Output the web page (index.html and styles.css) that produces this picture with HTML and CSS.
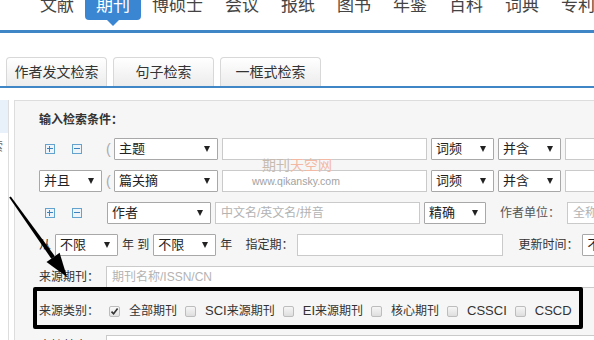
FILE: index.html
```html
<!DOCTYPE html>
<html lang="zh-CN">
<head>
    <meta charset="UTF-8">
    <meta name="viewport" content="width=device-width, initial-scale=1.0">
    <title>期刊检索</title>
    <link rel="stylesheet" href="styles.css">
</head>
<body>
    <div class="topnav">
        <ul class="nav">
            <li>文献</li>
            <li class="on">期刊</li>
            <li>博硕士</li>
            <li>会议</li>
            <li>报纸</li>
            <li>图书</li>
            <li>年鉴</li>
            <li>百科</li>
            <li>词典</li>
            <li>专利</li>
        </ul>
    </div>

    <div class="tabs">
        <div class="tab">作者发文检索</div>
        <div class="tab">句子检索</div>
        <div class="tab">一框式检索</div>
    </div>

    <div class="main">
        <div class="side">
            <div class="side-hl"></div>
            <div class="side-txt">索</div>
        </div>

        <div class="panel">
            <div class="title">输入检索条件：</div>

            <div class="row first">
                <span class="ops"><i class="op plus"></i><i class="op minus"></i></span>
                <span class="paren">(</span>
                <span class="sel w104">主题</span>
                <span class="inp w205"></span>
                <span class="sel w63">词频</span>
                <span class="sel w63">并含</span>
                <span class="inp grow"></span>
            </div>

            <div class="row">
                <span class="sel w63">并且</span>
                <span class="paren">(</span>
                <span class="sel w104">篇关摘</span>
                <span class="inp w205"></span>
                <span class="sel w63">词频</span>
                <span class="sel w63">并含</span>
                <span class="inp grow"></span>
            </div>

            <div class="row">
                <span class="ops"><i class="op plus"></i><i class="op minus"></i></span>
                <span class="sel w104 ml1">作者</span>
                <span class="inp w205">中文名/英文名/拼音</span>
                <span class="sel w62">精确</span>
                <span class="lbl muted ml10">作者单位：</span>
                <span class="inp grow ml3">全称</span>
            </div>

            <div class="row">
                <span class="lbl">从</span>
                <span class="sel w63">不限</span>
                <span class="lbl">年 到</span>
                <span class="sel w63">不限</span>
                <span class="lbl">年</span>
                <span class="lbl ml9">指定期：</span>
                <span class="inp w206"></span>
                <span class="lbl ml11">更新时间：</span>
                <span class="sel w63">不限</span>
            </div>

            <div class="row">
                <span class="lbl">来源期刊：</span>
                <span class="inp grow wide ml3">期刊名称/ISSN/CN</span>
            </div>

            <div class="row cats">
                <span class="lbl">来源类别：</span>
                <label class="cb-item first"><i class="cb on"><svg width="9" height="9" viewBox="0 0 9 9"><path d="M1.5 4.6 L3.6 6.8 L7.6 1.6" fill="none" stroke="#333" stroke-width="1.6"/></svg></i>全部期刊</label>
                <label class="cb-item"><i class="cb"></i><span class="en">SCI</span>来源期刊</label>
                <label class="cb-item"><i class="cb"></i><span class="en">EI</span>来源期刊</label>
                <label class="cb-item"><i class="cb"></i>核心期刊</label>
                <label class="cb-item"><i class="cb"></i><span class="en">CSSCI</span></label>
                <label class="cb-item"><i class="cb"></i><span class="en">CSCD</span></label>
            </div>

            <div class="row last">
                <span class="lbl">支持基金：</span>
                <span class="inp grow wide ml3"></span>
            </div>

            <div class="mark"></div>

            <div class="wm"><span class="wm-a">期刊</span><span class="wm-b">天空网</span></div>
            <div class="wm-url">www.qikansky.com</div>
        </div>
    </div>

    <svg class="arrow" width="594" height="340" viewBox="0 0 594 340">
        <polygon points="9.2,197.6 10.8,196.4 54.9,256.2 51.3,258.7" fill="#000"/>
        <polygon points="67,277 46.5,262.1 59.6,252.8" fill="#000"/>
    </svg>
</body>
</html>
```

FILE: styles.css
```css
* {
    box-sizing: border-box;
}
body {
    margin: 0;
    width: 594px;
    height: 340px;
    overflow: hidden;
    position: relative;
    background: #fff;
    font-family: "Liberation Sans", "Noto Sans CJK SC", sans-serif;
    font-size: 12px;
    color: #333;
}

/* top channel bar */
.topnav {
    height: 33px;
    border-bottom: 3px solid #3f86c6;
}
.nav {
    display: flex;
    margin: 0;
    padding: 0 0 0 29px;
    list-style: none;
}
.nav li {
    position: relative;
    margin-top: -9px;
    height: 29px;
    line-height: 29px;
    padding: 0 11px;
    font-size: 17px;
    color: #444;
    white-space: nowrap;
}
.nav li.on {
    background: #3a86d2;
    color: #fff;
    border-radius: 0 0 4px 4px;
}
.nav li.on::after {
    content: "";
    position: absolute;
    left: 50%;
    bottom: -6px;
    margin-left: -6px;
    border-top: 6px solid #3a86d2;
    border-left: 6px solid transparent;
    border-right: 6px solid transparent;
}

/* search type tabs */
.tabs {
    display: flex;
    gap: 6px;
    padding: 24px 0 0 6px;
    border-bottom: 2px solid #3f86c6;
}
.tab {
    width: 101px;
    height: 29px;
    line-height: 28px;
    text-align: center;
    font-size: 14px;
    color: #333;
    border: 1px solid #d8d8d8;
    border-bottom: none;
    border-radius: 4px 4px 0 0;
    background: linear-gradient(#ffffff, #ececec);
}

.main {
    display: flex;
    gap: 5px;
    padding-top: 12px;
}
.side {
    flex: none;
    width: 9px;
    height: 240px;
    border-right: 1px solid #ddd;
    overflow: hidden;
}
.side-hl {
    height: 33px;
    background: #e8f0f9;
}
.side-txt {
    display: flex;
    justify-content: flex-end;
    padding-right: 5px;
    height: 28px;
    line-height: 28px;
    color: #666;
    white-space: nowrap;
}

.panel {
    position: relative;
    flex: 1;
    min-width: 0;
    height: 260px;
    padding: 9px 0 0 24px;
    background: #f6f6f6;
    border: 1px solid #ddd;
    border-right: none;
}
.title {
    font-weight: bold;
    line-height: 20px;
    color: #333;
}

.row {
    display: flex;
    align-items: center;
    gap: 4px;
    height: 22px;
    margin-top: 10px;
    white-space: nowrap;
}
.row.first {
    margin-top: 8px;
}
.row.cats {
    margin-top: 12px;
}
.row.last {
    margin-top: 13px;
}

.ops {
    flex: none;
    display: flex;
    gap: 17px;
    width: 63px;
    padding-left: 6px;
}
.op {
    position: relative;
    width: 10px;
    height: 10px;
    border: 1px solid #65a3cf;
    background: #edf5fb;
}
.op::before {
    content: "";
    position: absolute;
    left: 1px;
    right: 1px;
    top: 3px;
    height: 1px;
    background: #3c82bd;
}
.plus::after {
    content: "";
    position: absolute;
    top: 1px;
    bottom: 1px;
    left: 3px;
    width: 1px;
    background: #3c82bd;
}
.paren {
    flex: none;
    width: 4px;
    font-size: 14px;
    color: #aaa;
}

.sel {
    position: relative;
    flex: none;
    height: 22px;
    line-height: 20px;
    padding-left: 4px;
    font-size: 13px;
    color: #222;
    background: #fff;
    border: 1px solid #a8a8a8;
    border-radius: 1px;
}
.sel::after {
    content: "";
    position: absolute;
    right: 7px;
    top: 7px;
    border-top: 6px solid #222;
    border-left: 3px solid transparent;
    border-right: 3px solid transparent;
}
.inp {
    flex: none;
    height: 22px;
    line-height: 20px;
    padding-left: 5px;
    color: #b3b3b3;
    background: #fff;
    border: 1px solid #cacaca;
}
.inp.grow {
    width: 100px;
}
.inp.wide {
    width: 520px;
}
.w62 { width: 62px; }
.w63 { width: 63px; }
.w104 { width: 104px; }
.w205 { width: 205px; }
.w206 { width: 206px; }
.ml1 { margin-left: 1px; }
.ml3 { margin-left: 3px; }
.ml9 { margin-left: 9px; }
.ml10 { margin-left: 10px; }
.ml11 { margin-left: 11px; }

.lbl {
    flex: none;
    line-height: 20px;
    color: #333;
}
.lbl.muted {
    color: #555;
}

.cb-item {
    flex: none;
    display: flex;
    align-items: center;
    margin-left: 4px;
    line-height: 20px;
    color: #333;
}
.cb-item.first {
    margin-left: 6px;
}
.cb-item .en {
    font-size: 13px;
}
.cb {
    display: flex;
    align-items: center;
    justify-content: center;
    width: 11px;
    height: 11px;
    margin-right: 9px;
    border: 1px solid #bdbdbd;
    border-radius: 2px;
    background: linear-gradient(#f6f6f6, #dedede);
}
.cb.on {
    background: linear-gradient(#fafafa, #e2e2e2);
}

/* annotation drawn on the screenshot */
.mark {
    position: absolute;
    left: 18px;
    top: 186px;
    width: 550px;
    height: 42px;
    border: 4px solid #000;
    border-radius: 2px;
}
.wm {
    position: absolute;
    left: 247px;
    top: 55px;
    font-size: 14px;
    line-height: 18px;
}
.wm-a {
    color: #c7bbb0;
}
.wm-b {
    color: #f3b9a2;
}
.wm-url {
    position: absolute;
    left: 237px;
    top: 73px;
    font-size: 10.5px;
    line-height: 14px;
    color: #a2a2a2;
}
.arrow {
    position: absolute;
    left: 0;
    top: 0;
    pointer-events: none;
}
```
